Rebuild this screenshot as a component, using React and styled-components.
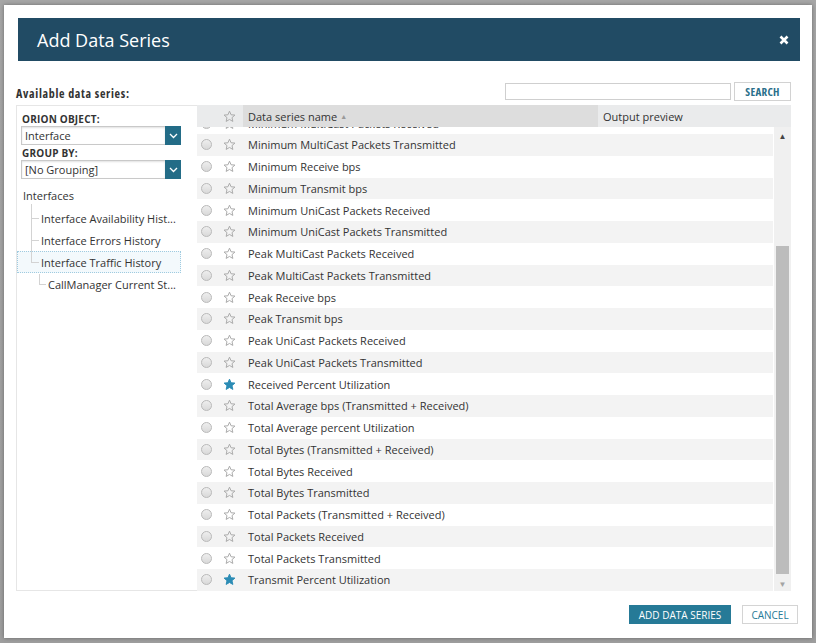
import React from 'react';
import styled, { createGlobalStyle } from 'styled-components';

const rows = [
  'Minimum MultiCast Packets Received',
  'Minimum MultiCast Packets Transmitted',
  'Minimum Receive bps',
  'Minimum Transmit bps',
  'Minimum UniCast Packets Received',
  'Minimum UniCast Packets Transmitted',
  'Peak MultiCast Packets Received',
  'Peak MultiCast Packets Transmitted',
  'Peak Receive bps',
  'Peak Transmit bps',
  'Peak UniCast Packets Received',
  'Peak UniCast Packets Transmitted',
  'Received Percent Utilization',
  'Total Average bps (Transmitted + Received)',
  'Total Average percent Utilization',
  'Total Bytes (Transmitted + Received)',
  'Total Bytes Received',
  'Total Bytes Transmitted',
  'Total Packets (Transmitted + Received)',
  'Total Packets Received',
  'Total Packets Transmitted',
  'Transmit Percent Utilization',
];

const starred = ['Received Percent Utilization', 'Transmit Percent Utilization'];

function Star({ filled }) {
  return (
    <svg width="13" height="13" viewBox="0 0 24 24">
      <path
        d="M12 2.2l2.9 6.6 7.1.6-5.4 4.7 1.6 7-6.2-3.7-6.2 3.7 1.6-7L2 9.4l7.1-.6z"
        fill={filled ? '#2b8cb5' : 'none'}
        stroke={filled ? '#2b8cb5' : '#a9a9a9'}
        strokeWidth="1.8"
        strokeLinejoin="round"
      />
    </svg>
  );
}

function Chevron() {
  return (
    <svg width="9" height="6" viewBox="0 0 9 6">
      <path d="M1 1l3.5 3.5L8 1" fill="none" stroke="#fff" strokeWidth="1.3" />
    </svg>
  );
}

function Select({ value }) {
  return (
    <SelectBox>
      <SelectValue>{value}</SelectValue>
      <SelectButton>
        <Chevron />
      </SelectButton>
    </SelectBox>
  );
}

function App() {
  return (
    <>
      <GlobalStyle />
      <Backdrop>
        <Dialog>
          <TitleBar>
            <Title>Add Data Series</Title>
            <CloseIcon width="10" height="10" viewBox="0 0 10 10">
              <path d="M1.5 1.5l7 7M8.5 1.5l-7 7" stroke="#fff" strokeWidth="2.6" />
            </CloseIcon>
          </TitleBar>

          <Toolbar>
            <SectionLabel>Available data series:</SectionLabel>
            <SearchGroup>
              <SearchInput />
              <SearchButton>SEARCH</SearchButton>
            </SearchGroup>
          </Toolbar>

          <Main>
            <SidePanel>
              <FieldLabel>ORION OBJECT:</FieldLabel>
              <Select value="Interface" />
              <FieldLabel>GROUP BY:</FieldLabel>
              <Select value="[No Grouping]" />
              <Tree>
                <TreeRoot>Interfaces</TreeRoot>
                <TreeItem>Interface Availability Hist...</TreeItem>
                <TreeItem>Interface Errors History</TreeItem>
                <TreeItem $last $selected>Interface Traffic History</TreeItem>
                <TreeChild>CallManager Current St...</TreeChild>
              </Tree>
            </SidePanel>

            <Table>
              <HeadRow>
                <HeadIcons>
                  <Star />
                </HeadIcons>
                <HeadCell $active>
                  Data series name<SortArrow>▲</SortArrow>
                </HeadCell>
                <HeadCell>Output preview</HeadCell>
              </HeadRow>
              <Body>
                <List>
                  <ListInner>
                    {rows.map((name, i) => (
                      <Row key={name} $striped={i % 2 === 1}>
                        <RowIcons>
                          <Radio />
                          <Star filled={starred.includes(name)} />
                        </RowIcons>
                        <RowName>{name}</RowName>
                      </Row>
                    ))}
                  </ListInner>
                </List>
                <ScrollBar>
                  <ScrollArrow $dark>▲</ScrollArrow>
                  <ScrollTrack>
                    <Thumb style={{ marginTop: 103, height: 328 }} />
                  </ScrollTrack>
                  <ScrollArrow>▼</ScrollArrow>
                </ScrollBar>
              </Body>
            </Table>
          </Main>

          <Footer>
            <PrimaryButton>ADD DATA SERIES</PrimaryButton>
            <SecondaryButton>CANCEL</SecondaryButton>
          </Footer>
        </Dialog>
      </Backdrop>
    </>
  );
}

export default App;

//#region Styling

const GlobalStyle = createGlobalStyle`
  html, body {
    margin: 0;
    padding: 0;
    background: #a3a3a3;
  }
  body {
    font-family: "Open Sans", "Liberation Sans", sans-serif;
    color: #333;
  }
`

const Backdrop = styled.div`
  width: 816px;
  height: 643px;
  padding: 5px 4px;
  box-sizing: border-box;
  background: linear-gradient(#a6a6a6, #9e9e9e);
`

const Dialog = styled.div`
  width: 808px;
  height: 633px;
  background: #fff;
  box-sizing: border-box;
  padding: 13px 12px 0 12px;
  display: flex;
  flex-direction: column;
  box-shadow: 0 0 4px rgba(0,0,0,0.35);
`

const TitleBar = styled.div`
  height: 43px;
  margin: 0 0 0 2px;
  background: #214b64;
  display: flex;
  align-items: center;
  justify-content: space-between;
  padding: 0 11px 0 19px;
`

const Title = styled.h1`
  margin: 0;
  font-family: "Open Sans", sans-serif;
  font-weight: normal;
  font-size: 18px;
  color: #fff;
`

const CloseIcon = styled.svg`
  display: block;
`

const Toolbar = styled.div`
  margin-top: 21px;
  height: 19px;
  display: flex;
  align-items: center;
  justify-content: space-between;
  padding-right: 9px;
`

const SectionLabel = styled.div`
  font-family: "Open Sans", sans-serif;
  font-stretch: 75%;
  font-weight: bold;
  font-size: 12px;
  letter-spacing: 0.7px;
  color: #333;
  padding-top: 4px;
`

const SearchGroup = styled.div`
  display: flex;
  align-items: center;
  gap: 3px;
`

const SearchInput = styled.input`
  width: 226px;
  height: 17px;
  box-sizing: border-box;
  border: 1px solid #cfcfcf;
  padding: 0 4px;
`

const SearchButton = styled.button`
  width: 57px;
  height: 19px;
  box-sizing: border-box;
  border: 1px solid #d2d2d2;
  background: #fff;
  color: #2a6f8b;
  font-family: "Open Sans", sans-serif;
  font-stretch: 75%;
  font-weight: bold;
  font-size: 11px;
  letter-spacing: 0.3px;
  padding: 0;
`

const Main = styled.div`
  margin-top: 4px;
  height: 486px;
  display: grid;
  grid-template-columns: 181px 594px;
`

const SidePanel = styled.div`
  border: 1px solid #e6e6e6;
  border-right: none;
  padding: 7px 0 0 4px;
  display: flex;
  flex-direction: column;
`

const FieldLabel = styled.div`
  font-size: 10px;
  font-weight: bold;
  color: #333;
  letter-spacing: 0.2px;
  line-height: 12px;
  margin: 0 0 1px 1px;
`

const SelectBox = styled.div`
  width: 160px;
  height: 19px;
  display: flex;
  margin-bottom: 2px;
  box-sizing: border-box;
`

const SelectValue = styled.div`
  flex: 1;
  border: 1px solid #c9c9c9;
  border-right: none;
  box-shadow: inset 0 1px 2px rgba(0,0,0,0.12);
  font-size: 11px;
  line-height: 17px;
  padding-left: 3px;
  color: #333;
`

const SelectButton = styled.div`
  width: 16px;
  background: #236c87;
  display: flex;
  align-items: center;
  justify-content: center;
`

const Tree = styled.div`
  margin-top: 4px;
  margin-left: -4px;
  display: flex;
  flex-direction: column;
  font-size: 11px;
  color: #333;
`

const TreeRoot = styled.div`
  height: 22px;
  line-height: 22px;
  padding-left: 6px;
`

const TreeItem = styled.div`
  position: relative;
  height: 22px;
  line-height: 21px;
  padding-left: 23px;
  margin-right: 16px;
  box-sizing: border-box;
  border: 1px dotted ${p => (p.$selected ? '#9fcbe0' : 'transparent')};
  background: ${p => (p.$selected ? '#f3f9fc' : 'transparent')};
  white-space: nowrap;

  &:before {
    content: "";
    position: absolute;
    left: 13px;
    top: -4px;
    height: ${p => (p.$last ? '14px' : '22px')};
    border-left: 1px solid #d3d3d3;
  }
  &:after {
    content: "";
    position: absolute;
    left: 13px;
    top: 10px;
    width: 8px;
    border-top: 1px solid #d3d3d3;
  }
`

const TreeChild = styled(TreeItem)`
  padding-left: 30px;
  &:before {
    left: 21px;
    top: 0;
    height: 10px;
  }
  &:after {
    left: 21px;
    width: 7px;
  }
`

const Table = styled.div`
  display: flex;
  flex-direction: column;
  min-width: 0;
`

const HeadRow = styled.div`
  height: 22px;
  display: grid;
  grid-template-columns: 46px 355px 1fr;
  background: #eaebec;
  font-size: 11px;
`

const HeadIcons = styled.div`
  display: flex;
  align-items: center;
  padding-left: 26px;
`

const HeadCell = styled.div`
  display: flex;
  align-items: center;
  padding-left: 5px;
  background: ${p => (p.$active ? '#dddddd' : 'transparent')};
  color: #333;
`

const SortArrow = styled.span`
  font-size: 7px;
  color: #999;
  margin-left: 3px;
`

const Body = styled.div`
  flex: 1;
  display: flex;
  min-height: 0;
`

const List = styled.div`
  flex: 1;
  overflow: hidden;
`

const ListInner = styled.div`
  margin-top: -14.75px;
`

const Row = styled.div`
  height: 21.76px;
  display: grid;
  grid-template-columns: 46px 1fr;
  align-items: center;
  background: ${p => (p.$striped ? '#f3f3f3' : '#fff')};
  font-size: 11px;
`

const RowIcons = styled.div`
  display: flex;
  align-items: center;
  gap: 11px;
  padding-left: 4px;
`

const Radio = styled.span`
  width: 9px;
  height: 9px;
  border-radius: 50%;
  border: 1px solid #b9b9b9;
  background: linear-gradient(#eeeeee, #d9d9d9);
`

const RowName = styled.div`
  padding-left: 5px;
  color: #333;
  white-space: nowrap;
`

const ScrollBar = styled.div`
  width: 17px;
  margin-left: 1px;
  background: #f0f0f0;
  display: flex;
  flex-direction: column;
`

const ScrollArrow = styled.div`
  height: 16px;
  font-size: 8px;
  display: flex;
  align-items: center;
  justify-content: center;
  color: ${p => (p.$dark ? '#444' : '#a3a3a3')};
`

const ScrollTrack = styled.div`
  flex: 1;
  display: flex;
  flex-direction: column;
  align-items: center;
`

const Thumb = styled.div`
  width: 13px;
  background: #bcbcbc;
`

const Footer = styled.div`
  margin-top: 14px;
  display: flex;
  justify-content: flex-end;
  gap: 11px;
  padding-right: 2px;
`

const PrimaryButton = styled.button`
  height: 19px;
  width: 102px;
  padding: 0;
  border: none;
  background: #267a97;
  color: #fff;
  font-family: "Open Sans", sans-serif;
  font-size: 10px;
`

const SecondaryButton = styled.button`
  height: 19px;
  width: 56px;
  padding: 0;
  border: 1px solid #d4d4d4;
  background: #fff;
  color: #267a97;
  font-family: "Open Sans", sans-serif;
  font-size: 10px;
`

//#endregion
